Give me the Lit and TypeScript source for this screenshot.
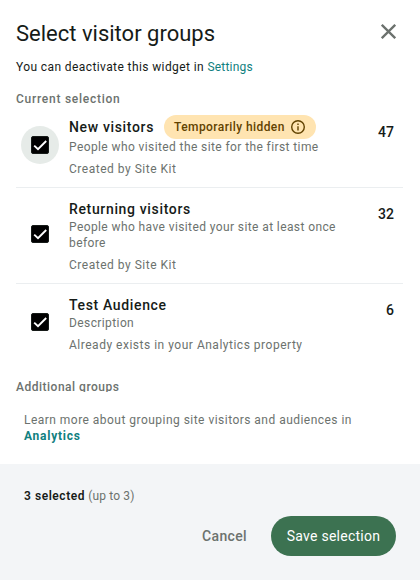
import { LitElement, html, css, nothing } from "lit";
import { customElement, property } from "lit/decorators.js";

interface Audience {
  title: string;
  description: string;
  source: string;
  count: number;
  hidden?: boolean;
  focused?: boolean;
}

const AUDIENCES: Audience[] = [
  {
    title: "New visitors",
    description: "People who visited the site for the first time",
    source: "Created by Site Kit",
    count: 47,
    hidden: true,
    focused: true,
  },
  {
    title: "Returning visitors",
    description: "People who have visited your site at least once before",
    source: "Created by Site Kit",
    count: 32,
  },
  {
    title: "Test Audience",
    description: "Description",
    source: "Already exists in your Analytics property",
    count: 6,
  },
];

@customElement("audience-row")
export class AudienceRow extends LitElement {
  @property({ attribute: false }) audience!: Audience;

  static styles = css`
    :host {
      display: flex;
      padding: 11px 9px 10px 5px;
      border-bottom: 1px solid #ebeef0;
    }
    :host(:last-of-type) {
      border-bottom-color: transparent;
    }
    .check {
      flex: none;
      align-self: center;
      display: flex;
      align-items: center;
      justify-content: center;
      width: 38px;
      height: 38px;
      margin: 0 10px 4px 0;
      border-radius: 50%;
    }
    .check.focused {
      background: #e6ebe8;
      margin-bottom: 2px;
    }
    .box {
      display: block;
      width: 18px;
      height: 18px;
      box-sizing: border-box;
      border: 1px solid #161b18;
      border-radius: 2px;
      background: #000;
    }
    .body {
      flex: 1;
      min-width: 0;
    }
    .head {
      display: flex;
      align-items: center;
      min-height: 20px;
      gap: 10px;
    }
    .title {
      font-size: 14px;
      line-height: 20px;
      font-weight: 500;
      letter-spacing: 0.65px;
      color: #161b18;
      white-space: nowrap;
    }
    .badge {
      display: flex;
      align-items: center;
      justify-content: space-between;
      box-sizing: border-box;
      width: 152px;
      height: 24px;
      padding: 0 11px 0 10px;
      border-radius: 12px;
      background: #ffe4b1;
      color: #624200;
      font-size: 12px;
      font-weight: 500;
      letter-spacing: 0.42px;
      white-space: nowrap;
    }
    .desc,
    .source {
      font-size: 12px;
      line-height: 16px;
      letter-spacing: 0.4px;
      color: #6c726e;
    }
    .desc {
      max-width: 278px;
    }
    .source {
      margin-top: 6px;
      letter-spacing: 0.51px;
    }
    .count {
      flex: none;
      padding-top: 5px;
      font-size: 14px;
      line-height: 20px;
      font-weight: 500;
      color: #161b18;
    }
    .hidden .count {
      padding-top: 7px;
    }
    svg {
      display: block;
    }
  `;

  render() {
    const a = this.audience;
    return html`
      <span class="check ${a.focused ? "focused" : ""}">
        <span class="box">
          <svg width="16" height="16" viewBox="0 0 16 16" fill="none">
            <path d="M2.2 8.6 6 12.2 14.2 4" stroke="#fff" stroke-width="1.9" />
          </svg>
        </span>
      </span>
      <div class="body">
        <div class="head">
          <span class="title">${a.title}</span>
          ${a.hidden
            ? html`<span class="badge">
                Temporarily hidden
                <svg width="14" height="14" viewBox="0 0 14 14" fill="none">
                  <circle cx="7" cy="7" r="6.3" stroke="#624200" stroke-width="1.4" />
                  <path d="M7 6.3v4.1M7 3.6v1.5" stroke="#624200" stroke-width="1.4" />
                </svg>
              </span>`
            : nothing}
        </div>
        <div class="desc">${a.description}</div>
        <div class="source">${a.source}</div>
      </div>
      <div class=${a.hidden ? "hidden" : ""}><div class="count">${a.count}</div></div>
    `;
  }
}

@customElement("app-root")
export class AppRoot extends LitElement {
  static styles = css`
    :host {
      display: flex;
      flex-direction: column;
      width: 420px;
      height: 580px;
      overflow: hidden;
      background: #fff;
      font-family: Roboto, "Noto Sans", sans-serif;
      color: #161b18;
    }
    header {
      display: flex;
      justify-content: space-between;
      padding: 20px 24px 0 16px;
    }
    h1 {
      margin: 0;
      font-size: 22px;
      line-height: 28px;
      font-weight: 400;
      letter-spacing: 0;
    }
    .close {
      display: block;
      margin-top: 4px;
    }
    .note {
      margin: 11px 16px 0;
      font-size: 12px;
      line-height: 16px;
      letter-spacing: 0.4px;
    }
    .link {
      color: #108080;
    }
    .note .link {
      letter-spacing: 0.2px;
    }
    .groups {
      box-sizing: border-box;
      height: 317px;
      overflow: hidden;
      padding: 16px 17px 0 16px;
    }
    h2 {
      margin: 0;
      font-size: 12px;
      line-height: 16px;
      font-weight: 500;
      letter-spacing: 0.5px;
      color: #6c726e;
    }
    .current {
      letter-spacing: 0.74px;
    }
    .list {
      margin: -3px 0 15px;
    }
    .learn {
      flex: 1;
      padding: 20px 60px 0 24px;
      font-size: 12px;
      line-height: 16px;
      letter-spacing: 0.47px;
      color: #6c726e;
    }
    .learn .link {
      font-weight: 700;
      letter-spacing: 0.75px;
    }
    footer {
      box-sizing: border-box;
      height: 116px;
      padding: 24px 24px 0;
      background: #f3f5f7;
    }
    .selected {
      font-size: 12px;
      line-height: 16px;
      letter-spacing: 0.15px;
      color: #6c726e;
    }
    .selected b {
      font-weight: 600;
      letter-spacing: 0.55px;
      color: #161b18;
    }
    .actions {
      display: flex;
      justify-content: flex-end;
      align-items: center;
      gap: 24px;
      margin-top: 12px;
    }
    button {
      padding: 0;
      border: 0;
      background: none;
      font: 500 14px/20px Roboto, sans-serif;
      letter-spacing: 0.35px;
      color: #6c726e;
      white-space: nowrap;
    }
    .save {
      width: 125px;
      height: 40px;
      border-radius: 20px;
      background: #3c7251;
      color: #fff;
      font-weight: 400;
      letter-spacing: 0.25px;
    }
  `;

  render() {
    return html`
      <header>
        <h1>Select visitor groups</h1>
        <svg class="close" width="15" height="15" viewBox="0 0 15 15" fill="none">
          <path d="M.8.8 14.2 14.2M14.2.8.8 14.2" stroke="#6c726e" stroke-width="2.3" />
        </svg>
      </header>
      <p class="note">
        You can deactivate this widget in <span class="link">Settings</span>
      </p>
      <section class="groups">
        <h2 class="current">Current selection</h2>
        <div class="list">
          ${AUDIENCES.map((a) => html`<audience-row .audience=${a}></audience-row>`)}
        </div>
        <h2>Additional groups</h2>
      </section>
      <div class="learn">
        Learn more about grouping site visitors and audiences in
        <span class="link">Analytics</span>
      </div>
      <footer>
        <div class="selected"><b>3 selected</b> (up to 3)</div>
        <div class="actions">
          <button>Cancel</button>
          <button class="save">Save selection</button>
        </div>
      </footer>
    `;
  }
}
